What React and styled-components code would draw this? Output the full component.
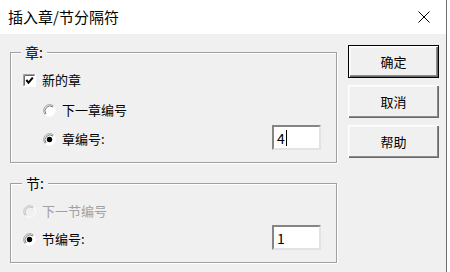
import styled, { createGlobalStyle } from "styled-components";

const GlobalStyle = createGlobalStyle`
  html, body {
    margin: 0;
    background: #fff;
  }
  body {
    font-family: "Noto Sans CJK SC", "Liberation Sans", sans-serif;
  }
`;

const Window = styled.div`
  width: 446px;
  height: 272px;
  border-right: 1px solid #707070;
  display: flex;
  flex-direction: column;
  font-size: 13px;
  color: #000;
`;

const TitleBar = styled.div`
  height: 34px;
  flex-shrink: 0;
  background: #fff;
  display: flex;
  align-items: center;
  justify-content: space-between;
  padding: 0 16px 0 8px;
`;

const Title = styled.span`
  font-size: 15px;
  line-height: 20px;
`;

const Body = styled.div`
  flex: 1;
  background: #f0f0f0;
  display: flex;
  align-items: flex-start;
  gap: 11px;
  padding: 11px 0 0 10px;
`;

const LeftCol = styled.div`
  width: 327px;
  margin-top: 7px;
  display: flex;
  flex-direction: column;
  gap: 20px;
`;

const Group = styled.div`
  position: relative;
  box-sizing: border-box;
  border: 1px solid #a0a0a0;
  box-shadow: inset 1px 1px 0 #fff, 1px 1px 0 #fff;
  padding: 17px 15px 12px 12px;
  display: flex;
  flex-direction: column;
`;

const Legend = styled.span`
  position: absolute;
  top: -9px;
  left: ${({ $left }) => $left}px;
  padding: 0 4px;
  background: #f0f0f0;
  line-height: 16px;
  font-size: 14px;
`;

const Row = styled.div`
  display: flex;
  align-items: center;
  justify-content: space-between;
  height: ${({ $h }) => $h}px;
  margin-top: ${({ $mt }) => $mt || 0}px;
`;

const Option = styled.label`
  display: flex;
  align-items: center;
  gap: 6px;
  line-height: 18px;
  margin-left: ${({ $indent }) => $indent || 0}px;
  padding-top: ${({ $shift }) => $shift || 0}px;
  color: ${({ $disabled }) => ($disabled ? "#a0a0a0" : "#000")};

  svg {
    display: block;
    flex-shrink: 0;
  }
`;

const Field = styled.div`
  box-sizing: border-box;
  width: 49px;
  height: 25px;
  background: #fff;
  border-style: solid;
  border-width: 2px;
  border-color: #858585 #e3e3e3 #e3e3e3 #858585;
  padding-left: 3px;
  display: flex;
  align-items: center;
  font-size: 14px;
  line-height: 16px;
`;

const Caret = styled.span`
  display: inline-block;
  width: 1px;
  height: 16px;
  background: #000;
  margin-left: 1px;
`;

const RightCol = styled.div`
  display: flex;
  flex-direction: column;
  gap: 7px;
`;

const Button = styled.button`
  box-sizing: border-box;
  width: 91px;
  height: 33px;
  padding: 0;
  font-family: inherit;
  font-size: 13px;
  color: #000;
  background: #f0f0f0;
  border: ${({ $default }) => ($default ? "1px solid #000" : "none")};
  box-shadow: inset 1px 1px 0 #fff, inset -1px -1px 0 #696969,
    inset -2px -2px 0 #8a8a8a, inset 2px 2px 0 #f8f8f8;
`;

function CloseIcon() {
  return (
    <svg width="12" height="12" viewBox="0 0 12 12">
      <path d="M0.5 0.5 L11.5 11.5 M11.5 0.5 L0.5 11.5" stroke="#000" strokeWidth="1" />
    </svg>
  );
}

function Checkbox({ checked }) {
  return (
    <svg width="13" height="13" viewBox="0 0 13 13">
      <rect x="0" y="0" width="13" height="13" fill="#fff" />
      <path d="M0.5 12.5 V0.5 H12.5" stroke="#a0a0a0" fill="none" />
      <path d="M1.5 11.5 V1.5 H11.5" stroke="#696969" fill="none" />
      <path d="M12.5 0 V12.5 H0" stroke="#fff" fill="none" />
      {checked && (
        <path d="M3.3 6 L5.5 8.6 L9.8 3.6" stroke="#000" strokeWidth="2" fill="none" />
      )}
    </svg>
  );
}

function Radio({ checked, disabled }) {
  const dark = disabled ? "#c8c8c8" : "#a0a0a0";
  const darker = disabled ? "#c0c0c0" : "#7a7a7a";
  return (
    <svg width="13" height="13" viewBox="0 0 13 13">
      <circle cx="6.5" cy="6.5" r="5.5" fill={disabled ? "#f0f0f0" : "#fff"} />
      <path d="M2.26 10.74 A6 6 0 0 1 10.74 2.26" stroke={dark} fill="none" />
      <path d="M10.74 2.26 A6 6 0 0 1 2.26 10.74" stroke="#fff" fill="none" />
      <path d="M3 10 A5 5 0 0 1 10 3" stroke={darker} fill="none" />
      {checked && <circle cx="6.5" cy="6.5" r="2.7" fill="#000" />}
    </svg>
  );
}

export default function App() {
  return (
    <>
      <GlobalStyle />
      <Window>
        <TitleBar>
          <Title>插入章/节分隔符</Title>
          <CloseIcon />
        </TitleBar>
        <Body>
          <LeftCol>
            <Group>
              <Legend $left={10}>章:</Legend>
              <Row $h={20}>
                <Option>
                  <Checkbox checked />
                  新的章
                </Option>
              </Row>
              <Row $h={20} $mt={10}>
                <Option $indent={20}>
                  <Radio />
                  下一章编号
                </Option>
              </Row>
              <Row $h={25} $mt={5}>
                <Option $indent={20} $shift={3}>
                  <Radio checked />
                  章编号:
                </Option>
                <Field>
                  4
                  <Caret />
                </Field>
              </Row>
            </Group>
            <Group>
              <Legend $left={11}>节:</Legend>
              <Row $h={20}>
                <Option $disabled>
                  <Radio disabled />
                  下一节编号
                </Option>
              </Row>
              <Row $h={25} $mt={4}>
                <Option $shift={3}>
                  <Radio checked />
                  节编号:
                </Option>
                <Field>1</Field>
              </Row>
            </Group>
          </LeftCol>
          <RightCol>
            <Button $default>确定</Button>
            <Button>取消</Button>
            <Button>帮助</Button>
          </RightCol>
        </Body>
      </Window>
    </>
  );
}
